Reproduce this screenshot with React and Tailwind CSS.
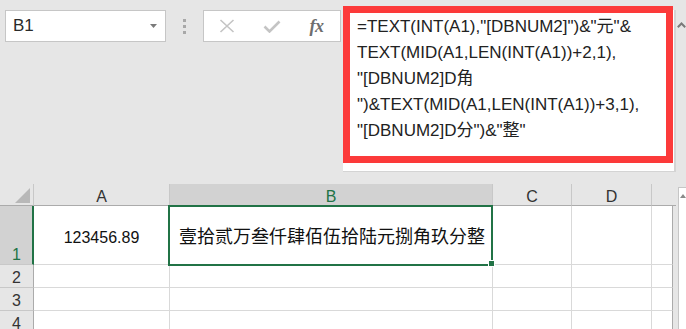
import React from "react";

const cols = [
  { key: "A", w: "w-[136px]" },
  { key: "B", w: "w-[323px]" },
  { key: "C", w: "w-[79px]" },
  { key: "D", w: "w-[80px]" },
];

function RowHeader({ n, selected, h }) {
  return (
    <div
      className={`w-[34px] ${h} flex items-end justify-center pb-[1px] text-[16px] leading-[16px] border-b ${
        selected
          ? "bg-[#d2d2d2] text-[#217346] border-r-2 border-r-[#217346] border-b-[#c8c8c8] pl-[1px]"
          : "bg-[#e6e6e6] text-[#333] border-r border-r-[#ababab] border-b-[#c8c8c8]"
      }`}
    >
      {n}
    </div>
  );
}

function EmptyRow({ n, h }) {
  return (
    <div className="flex">
      <RowHeader n={n} h={h} />
      <div className={`w-[136px] ${h} bg-white border-r border-b border-[#d9d9d9]`} />
      <div className={`w-[323px] ${h} bg-white border-r border-b border-[#d9d9d9]`} />
      <div className={`w-[79px] ${h} bg-white border-r border-b border-[#d9d9d9]`} />
      <div className={`w-[80px] ${h} bg-white border-r border-b border-[#d9d9d9]`} />
      <div className={`w-[21px] ${h} bg-white border-r border-r-[#ababab] border-b border-b-[#d9d9d9]`} />
    </div>
  );
}

export default function App() {
  const formula = [
    '=TEXT(INT(A1),"[DBNUM2]")&"元"&',
    "TEXT(MID(A1,LEN(INT(A1))+2,1),",
    '"[DBNUM2]D角',
    '")&TEXT(MID(A1,LEN(INT(A1))+3,1),',
    '"[DBNUM2]D分")&"整"',
  ];
  return (
    <div className="w-[686px] h-[329px] overflow-hidden bg-[#e6e6e6] text-[#1a1a1a] font-['Liberation_Sans','Noto_Sans_CJK_SC',sans-serif]">
      {/* Top: name box + formula bar */}
      <div className="flex items-start h-[184px] pt-[10px]">
        <div className="ml-[5px] w-[161px] h-[32px] bg-white border border-[#c6c6c6] flex items-center pl-[7px] pr-[8px]">
          <span className="flex-1 text-[17px] leading-[20px] text-[#2a2a2a]">B1</span>
          <svg width="7" height="4" viewBox="0 0 7 4">
            <polygon points="0,0 7,0 3.5,4" fill="#7a7a7a" />
          </svg>
        </div>
        <div className="w-[37px] flex flex-col items-center pt-[9px] gap-[3px]">
          <div className="w-[3px] h-[3px] bg-[#a8a8a8]" />
          <div className="w-[3px] h-[3px] bg-[#a8a8a8]" />
          <div className="w-[3px] h-[3px] bg-[#a8a8a8]" />
        </div>
        <div className="w-[138px] h-[32px] bg-white border border-[#c6c6c6] flex items-center">
          <div className="w-[45px] flex justify-center">
            <svg width="16" height="14" viewBox="0 0 16 14">
              <path d="M1.5 1 L14.5 13 M14.5 1 L1.5 13" stroke="#c4c4c4" strokeWidth="1.6" fill="none" />
            </svg>
          </div>
          <div className="w-[45px] flex justify-center">
            <svg width="18" height="13" viewBox="0 0 18 13">
              <path d="M1.5 6.5 L6.5 11.5 L16.5 1.5" stroke="#c4c4c4" strokeWidth="2.6" fill="none" />
            </svg>
          </div>
          <div className="w-[45px] flex justify-center">
            <span className="font-['Liberation_Serif',serif] italic font-bold text-[18px] leading-[20px] text-[#6e6e6e] tracking-[-0.5px]">
              fx
            </span>
          </div>
        </div>
        <div className="ml-[2px] relative w-[333px] h-[162px] bg-white border-r-2 border-b border-[#d4d4d4]">
          <div className="absolute left-0 top-[-4px] w-[330px] h-[157px] border-[7px] border-[#fc3a3a]" />
          <div className="pl-[14px] pt-[4px] text-[17px] leading-[26px] text-[#222]">
            {formula.map((l, i) => (
              <div key={i} className="whitespace-pre">
                {l}
              </div>
            ))}
          </div>
        </div>
        <div className="w-[10px] flex justify-center pt-[12px]">
          <svg width="9" height="6" viewBox="0 0 9 6">
            <polyline points="0.8,5.2 4.5,1.5 8.2,5.2" stroke="#7a7a7a" strokeWidth="2" fill="none" />
          </svg>
        </div>
      </div>

      {/* Grid */}
      <div className="flex">
        <div className="relative">
          {/* header row */}
          <div className="flex">
            <div className="w-[34px] h-[22px] border-r border-r-[#c8c8c8] border-b border-b-[#ababab] flex items-end justify-end pr-[3px] pb-[2px]">
              <svg width="15" height="15" viewBox="0 0 15 15">
                <polygon points="15,0 15,15 0,15" fill="#b8b8b8" />
              </svg>
            </div>
            {cols.map((c) => (
              <div
                key={c.key}
                className={`${c.w} h-[22px] flex items-end justify-center text-[16px] leading-[16px] border-r border-r-[#c8c8c8] border-b border-b-[#ababab] ${
                  c.key === "B" ? "bg-[#d2d2d2] text-[#217346]" : "bg-[#e6e6e6] text-[#333]"
                }`}
              >
                {c.key}
              </div>
            ))}
            <div className="w-[24px] h-[22px] border-b border-b-[#ababab]" />
          </div>
          {/* row 1 */}
          <div className="flex">
            <RowHeader n={1} selected h="h-[59px]" />
            <div className="w-[136px] h-[59px] bg-white border-r border-b border-[#d9d9d9] flex items-end justify-center pb-[18px] text-[16px] leading-[16px] text-[#111]">
              123456.89
            </div>
            <div className="w-[323px] h-[59px] bg-white border-r border-b border-[#d9d9d9] flex items-center pl-[9px] pt-[4px] text-[18px] leading-[22px] text-[#111] whitespace-nowrap">
              壹拾贰万叁仟肆佰伍拾陆元捌角玖分整
            </div>
            <div className="w-[79px] h-[59px] bg-white border-r border-b border-[#d9d9d9]" />
            <div className="w-[80px] h-[59px] bg-white border-r border-b border-[#d9d9d9]" />
            <div className="w-[21px] h-[59px] bg-white border-r border-r-[#ababab] border-b border-b-[#d9d9d9]" />
          </div>
          <EmptyRow n={2} h="h-[23px]" />
          <EmptyRow n={3} h="h-[23px]" />
          <EmptyRow n={4} h="h-[23px]" />

          {/* selection */}
          <div className="absolute left-[168px] top-[21px] w-[325px] h-[61px] border-2 border-[#217346]" />
          <div className="absolute left-[488px] top-[76px] w-[7px] h-[7px] bg-[#217346] border border-white" />
        </div>
        <div className="w-[3px]" />
        <div className="w-[10px] mt-[3px] h-[150px] bg-white border-l border-t border-[#c6c6c6] flex justify-center pt-[6px]">
          <svg width="6" height="4" viewBox="0 0 6 4">
            <polygon points="3,0 6,4 0,4" fill="#8a8a8a" />
          </svg>
        </div>
      </div>
    </div>
  );
}
